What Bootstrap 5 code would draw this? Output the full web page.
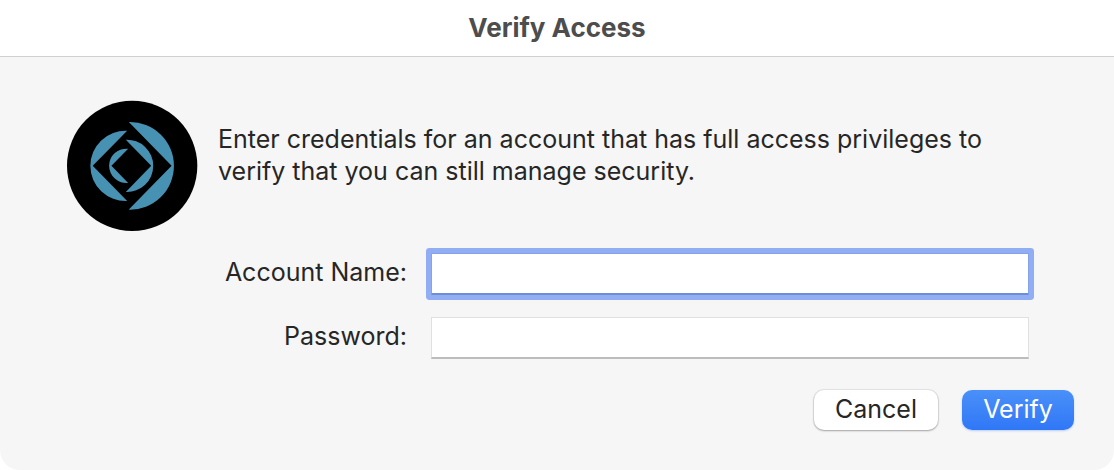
<!DOCTYPE html>
<html lang="en">
<head>
<meta charset="utf-8">
<meta name="viewport" content="width=device-width, initial-scale=1">
<title>Verify Access</title>
<link href="https://cdn.jsdelivr.net/npm/bootstrap@5.3.0/dist/css/bootstrap.min.css" rel="stylesheet">
<style>
  body { font-family: Inter, "Liberation Sans", sans-serif; font-size: 25px; line-height: 32px; color: #262626; background: #fff; }
  .title-bar { height: 57px; padding-bottom: 1px; border-bottom: 1px solid #d0d0d0; background: #fff; }
  .title-bar h1 { font-size: 26px; line-height: 32px; font-weight: 700; color: #4d4d4d; }
  .panel { background: #f6f6f6; border-radius: 0 0 20px 20px; padding: 43px 40px 38px 67px; }
  .intro { gap: 20px; }
  .intro p { margin-top: 23px; max-width: 810px; }
  .app-logo { width: 131px; height: 131px; }
  .fields { display: grid; grid-template-columns: 340px 1fr; column-gap: 24px; row-gap: 22px; margin: 22px 45px 0 0; }
  .fields label { padding-bottom: 5px; }
  .field-box { height: 42px; font-size: 25px; border: 1px solid #e0e0e0; border-bottom: 2px solid #bcbcbc; background: #fff; border-radius: 0; }
  .field-box.current, .field-box:focus { border-color: #87a3e8; border-bottom-color: #6f8dd3; box-shadow: 0 0 0 5px #91adf3; border-radius: 1px; outline: 0; }
  .actions { gap: 24px; margin-top: 31px; }
  .push { height: 40px; padding: 0 0 2px; font-size: 25px; line-height: 32px; border: 0; border-radius: 10px; }
  .push-cancel, .push-cancel:hover { width: 124px; background: #fff; color: #262626; box-shadow: 0 0 1px 1px rgba(0,0,0,.08), 0 1px 2px rgba(0,0,0,.28); }
  .push-verify, .push-verify:hover { width: 112px; color: #fff; background: linear-gradient(#4a90f8, #3077f7); box-shadow: 0 1px 2px rgba(48,119,247,.3); }
</style>
</head>
<body>
<div class="d-flex flex-column min-vh-100">
  <header class="title-bar d-flex align-items-center justify-content-center">
    <h1 class="m-0">Verify Access</h1>
  </header>
  <main class="panel flex-grow-1">
    <form>
      <div class="intro d-flex align-items-start">
        <svg class="app-logo flex-shrink-0" viewBox="21 19 392 392" aria-hidden="true">
          <circle cx="216" cy="216" r="195" fill="#000"/>
          <g fill="#4791b2">
            <path d="M206 85A131.06 131.06 0 1 1 206 347L334 216Z"/>
            <path d="M201 111A105.12 105.12 0 1 0 201 321L98 216Z"/>
            <path d="M197 138A78.1 78.1 0 1 1 197 294L273 216Z"/>
            <path d="M204 165A51.32 51.32 0 1 0 204 267L154 216Z"/>
          </g>
        </svg>
        <p class="mb-0">Enter credentials for an account that has full access privileges to verify that you can still manage security.</p>
      </div>
      <div class="fields align-items-center">
        <label class="text-end" for="account">Account Name:</label>
        <input class="field-box current w-100 px-2" type="text" id="account" autocomplete="username">
        <label class="text-end" for="password">Password:</label>
        <input class="field-box w-100 px-2" type="password" id="password" autocomplete="current-password">
      </div>
      <div class="actions d-flex justify-content-end">
        <button type="button" class="btn push push-cancel">Cancel</button>
        <button type="submit" class="btn push push-verify">Verify</button>
      </div>
    </form>
  </main>
</div>
<script src="https://cdn.jsdelivr.net/npm/bootstrap@5.3.0/dist/js/bootstrap.bundle.min.js"></script>
</body>
</html>
